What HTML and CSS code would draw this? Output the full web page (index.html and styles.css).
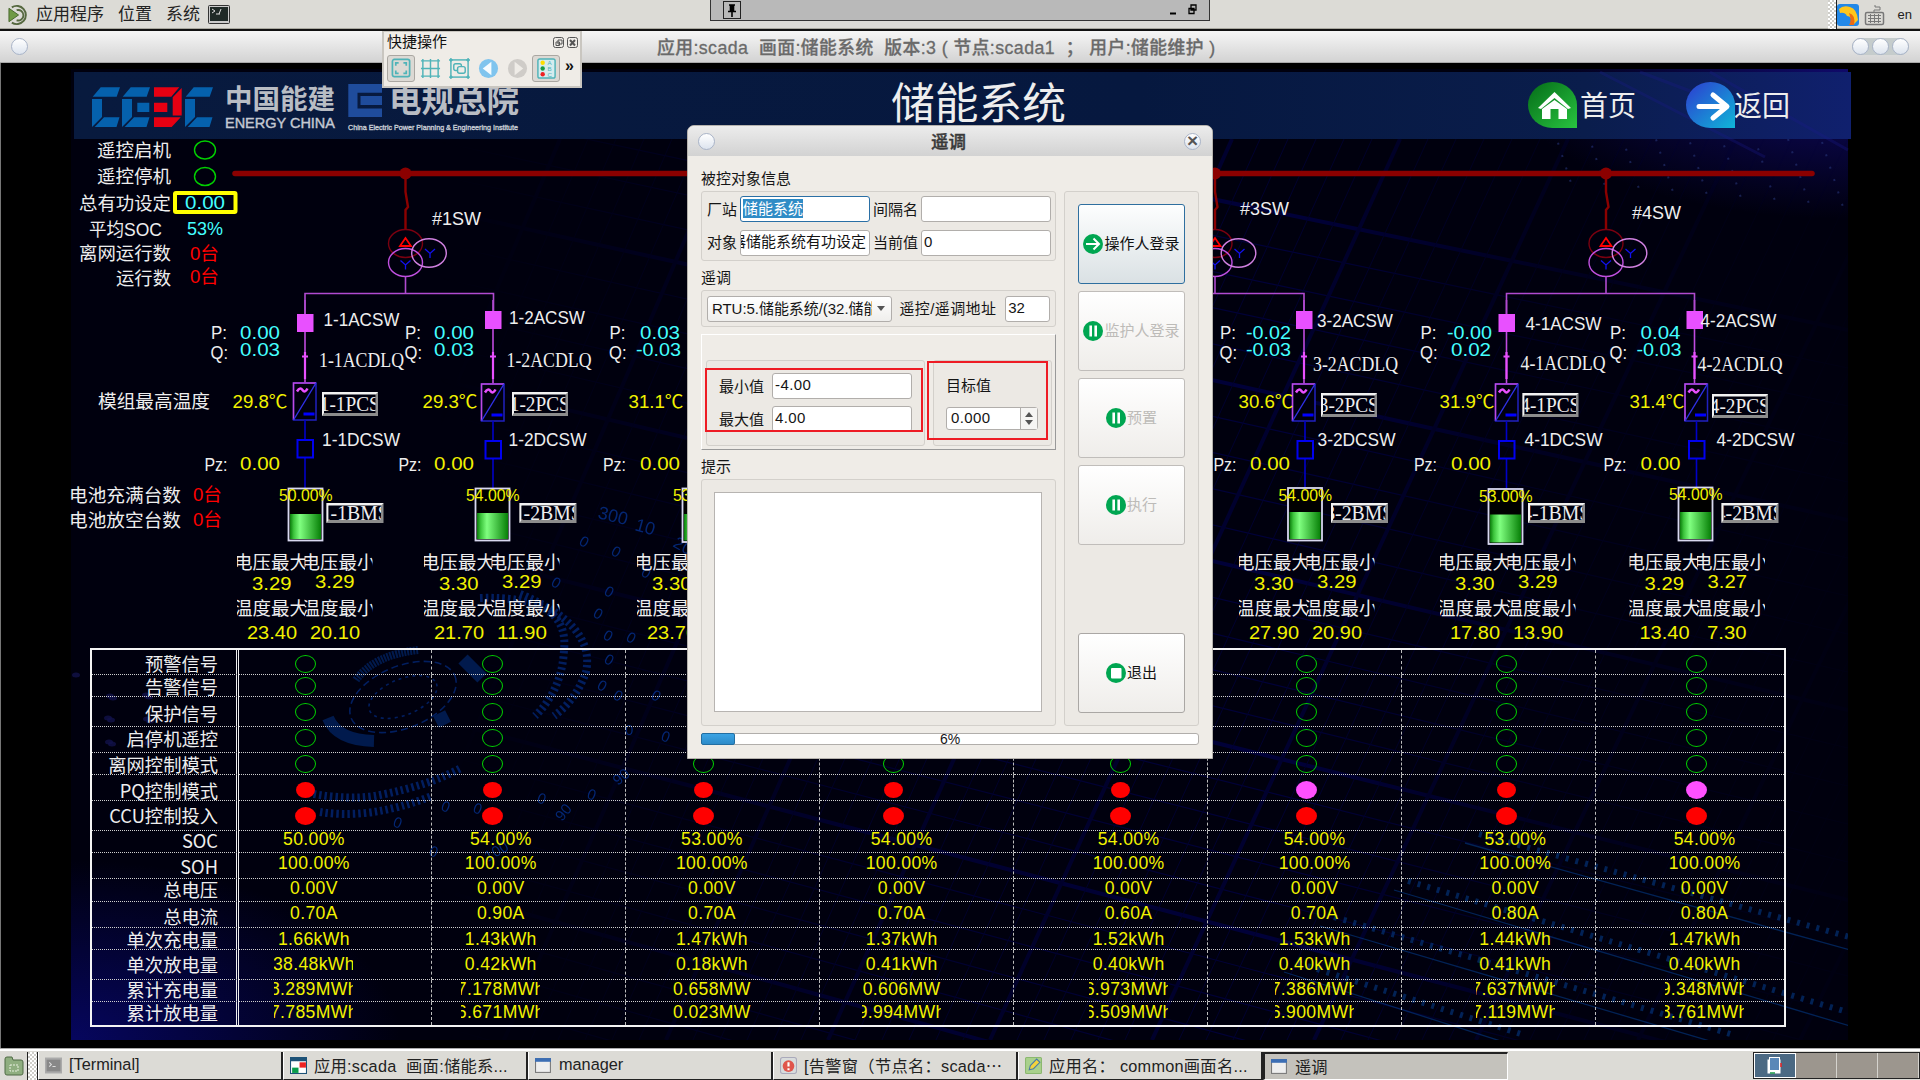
FILE: index.html
```html
<!DOCTYPE html>
<html lang="zh-CN">
<head>
<meta charset="utf-8">
<title>储能系统</title>
<link rel="stylesheet" href="styles.css">
</head>
<body>
<div class="desktop">
  <header class="panel">
    <svg class="mate-icon" viewBox="0 0 24 22"><path d="M1 4 L11 11 L1 18Z" fill="#6f9a45" stroke="#47662d"/><path d="M4 3 A9.5 9.5 0 1 1 4 19" fill="none" stroke="#55683f" stroke-width="2"/><path d="M9 6 A5.5 5.5 0 1 1 9 16.5" fill="none" stroke="#55683f" stroke-width="2"/></svg>
    <span class="menu m1">应用程序</span><span class="menu m2">位置</span><span class="menu m3">系统</span>
    <svg class="term-icon" viewBox="0 0 22 20"><rect x=".5" y=".5" width="21" height="18" rx="1" fill="#ccc" stroke="#333"/><rect x="2" y="2" width="18" height="14" fill="#1f2a27"/><path d="M4 4l3 2-3 2M8 9h4M13 4l-2 5" stroke="#ddd" fill="none"/></svg>
    <span class="clock"><i>月</i><i>日</i><i>星期</i></span>
    <div class="tray">
      <span class="grip"></span>
      <svg width="22" height="22" viewBox="0 0 22 22"><rect width="22" height="22" rx="3" fill="#2288e8"/><path d="M2 5Q6 1 13 3Q20 5 21 16L16 21Q15 12 10 12Q8 8 3 9Z" fill="#ffc61c"/><path d="M12 9q7 2 5 12h-5q3-4 0-12" fill="#ec6a12"/></svg>
      <svg width="22" height="22" viewBox="0 0 22 22" fill="none" stroke="#777"><rect x="1.500" y="8.500" width="18" height="12" rx="1.500" stroke-width="1.500"/><path d="M4 11.500h13M4 14.500h13M4 17.500h13M6.500 10v9M10.500 10v9M14.500 10v9M10 8V6h6V3h-5V1" /></svg>
      <span class="lang">en</span>
    </div>
    <div class="remote-bar">
      <svg class="pin" viewBox="0 0 18 18"><rect x=".5" y=".5" width="17" height="17" fill="none" stroke="#222"/><path d="M6 4h6M9 4v12M7.500 4v6M10.500 4v6M5 10.500h8" stroke="#000" stroke-width="1.600"/></svg>
      <svg class="winctl" viewBox="0 0 30 14"><path d="M1 10.500h6" stroke="#000" stroke-width="2"/><path d="M22 2h5v5h-5zM20 5.500h5v5h-5z" fill="#b9b9b9" stroke="#000" stroke-width="1.300"/></svg>
    </div>
  </header>

  <div class="titlebar">
    <span class="orb"></span>
    <span class="title">应用:scada&nbsp; 画面:储能系统&nbsp; 版本:3 ( 节点:scada1 &nbsp;； 用户:储能维护 )</span>
    <span class="orbs"><span class="orb"></span><span class="orb"></span><span class="orb"></span></span>
  </div>

  <main class="stage">
    <svg class="scene" id="scene" viewBox="0 63 1920 985"></svg>
    <div class="signals" id="signals"></div>

    <section class="quick">
      <div class="quick-head"><span>快捷操作</span>
        <svg width="26" height="12" viewBox="0 0 26 12" fill="none" stroke="#555"><rect x=".5" y=".5" width="10" height="10" rx="2"/><path d="M5 3h4v4h-4zM3 5h3.500v3.500h-3.500z"/><rect x="14.500" y=".5" width="10" height="10" rx="2"/><path d="M17 3l5 5.500M22 3l-5 5.500" stroke-width="2"/></svg>
      </div>
      <div class="quick-tools">
        <span class="tool on"><svg viewBox="0 0 22 22" fill="none" stroke="#4fb3b8" stroke-width="1.800"><rect x="1.500" y="1.500" width="18" height="18" rx="2"/><path d="M5 8V5h3M13 5h3v3M16 13v3h-3M8 16H5v-3"/></svg></span>
        <span class="tool"><svg viewBox="0 0 22 22" fill="none" stroke="#4fb3b8" stroke-width="1.500"><path d="M1 3h20M1 11h20M1 19h20M3 1v20M11 1v20M19 1v20"/></svg></span>
        <span class="tool"><svg viewBox="0 0 22 22" fill="none" stroke="#4fb3b8" stroke-width="1.500"><rect x="2" y="2" width="18" height="18"/><rect x="5" y="6" width="8" height="7" rx="2"/><rect x="9" y="9" width="8" height="7" rx="2" fill="#efece7"/><path d="M0 2h4M2 0v4M18 2h4M20 0v4M0 20h4M2 18v4M18 20h4M20 18v4"/></svg></span>
        <span class="tool"><svg viewBox="0 0 22 22"><circle cx="11" cy="11" r="10" fill="#7fc4ee"/><path d="M14 4v14L5 11Z" fill="#f4fbff"/></svg></span>
        <span class="tool"><svg viewBox="0 0 22 22"><circle cx="11" cy="11" r="10" fill="#cfccc8"/><path d="M8 4v14l9-7Z" fill="#efece7"/></svg></span>
        <span class="tool on"><svg viewBox="0 0 22 22"><rect x="2" y="1" width="18" height="20" rx="2" fill="#d5ecee" stroke="#4fb3b8" stroke-width="1.500"/><circle cx="7" cy="5" r="2.300" fill="#fd0"/><circle cx="7" cy="11" r="2.300" fill="#1a9a48"/><circle cx="7" cy="17" r="2.300" fill="#e22"/><text x="12" y="7.500" class="abc">A</text><text x="12" y="13.500" class="abc">B</text><text x="12" y="19.500" class="abc">C</text></svg></span>
        <span class="more">»</span>
      </div>
    </section>

    <section class="dialog">
      <div class="dialog-title"><span class="orb"></span><b>遥调</b><span class="orb close">×</span></div>
      <div class="dialog-body">
        <div class="left">
          <label class="cap c1">被控对象信息</label>
          <div class="group info">
            <span>厂站</span><div class="field focus"><mark>储能系统</mark></div><span>间隔名</span><div class="field"></div>
            <span>对象</span><div class="field tail"><span>器储能系统有功设定</span></div><span>当前值</span><div class="field">0</div>
          </div>
          <label class="cap c2">遥调</label>
          <div class="group rtu">
            <div class="combo"><span>RTU:5.储能系统/(32.储能</span><i class="down"></i></div>
            <span class="addr">遥控/遥调地址</span><div class="field">32</div>
          </div>
          <div class="frame">
            <div class="group limits">
              <span>最小值</span><div class="field">-4.00</div>
              <span>最大值</span><div class="field">4.00</div>
            </div>
            <div class="group target">
              <span>目标值</span>
              <div class="spin"><span>0.000</span><em><i class="up"></i><i class="down"></i></em></div>
            </div>
            <div class="mark mark-a"></div><div class="mark mark-b"></div>
          </div>
          <label class="cap c3">提示</label>
          <div class="group hint"><div class="textarea"></div></div>
        </div>
        <div class="group actions">
          <button class="act primary"><svg viewBox="0 0 20 20"><circle cx="10" cy="10" r="10" fill="#00a651"/><path d="M3 10h13M10.500 4.500L16 10l-5.500 5.500" stroke="#fff" stroke-width="2" fill="none"/></svg><span>操作人登录</span></button>
          <button class="act off"><svg viewBox="0 0 20 20"><circle cx="10" cy="10" r="10" fill="#00a651"/><path d="M7.700 4.500v11M12.700 4.500v11" stroke="#fff" stroke-width="2.600"/></svg><span>监护人登录</span></button>
          <button class="act off"><svg viewBox="0 0 20 20"><circle cx="10" cy="10" r="10" fill="#00a651"/><path d="M7.700 4.500v11M12.700 4.500v11" stroke="#fff" stroke-width="2.600"/></svg><span>预置</span></button>
          <button class="act off"><svg viewBox="0 0 20 20"><circle cx="10" cy="10" r="10" fill="#00a651"/><path d="M7.700 4.500v11M12.700 4.500v11" stroke="#fff" stroke-width="2.600"/></svg><span>执行</span></button>
          <button class="act exit"><svg viewBox="0 0 20 20"><circle cx="10" cy="10" r="10" fill="#00a651"/><rect x="5" y="5" width="10.500" height="10.500" rx="1" fill="#fff"/></svg><span>退出</span></button>
        </div>
      </div>
      <div class="progress"><i></i><span>6%</span></div>
    </section>
  </main>

  <footer class="taskbar">
    <span class="show"><svg viewBox="0 0 20 20"><path d="M1 3q0-2 2-2h5l1 3h8q2 0 2 2v11q0 2-2 2H3q-2 0-2-2Z" fill="#8fae80" stroke="#4f6b45"/><rect x="6" y="9" width="8" height="6" fill="none" stroke="#e8f0e0" stroke-dasharray="2 1"/></svg></span>
    <span class="grip"></span>
    <span class="task"><svg viewBox="0 0 16 16"><rect x=".5" y="1.500" width="15" height="13" fill="#888" stroke="#aaa" stroke-width="2"/><path d="M4 5l2 2-2 2M7 9h3" stroke="#ddd" fill="none"/></svg><b>[Terminal]</b></span>
    <span class="task"><svg viewBox="0 0 16 16"><rect x=".5" y=".5" width="15" height="15" fill="#fff" stroke="#1d5277"/><path d="M0 0h16v4H0z" fill="#1d5277"/><path d="M9 5h6v5H9z" fill="#e22"/><path d="M2 10h6v5H2z" fill="#0a9c4b"/></svg><b class="wide">应用:scada&nbsp; 画面:储能系...</b></span>
    <span class="task"><svg viewBox="0 0 16 16"><rect x=".5" y="1.500" width="14" height="13" fill="#eee" stroke="#777"/><path d="M0 1h15v3.500H0z" fill="#3c6eb4"/></svg><b>manager</b></span>
    <span class="task"><svg viewBox="0 0 16 16"><rect x=".5" y=".5" width="15" height="15" rx="2" fill="#d8dcdc" stroke="#aab"/><circle cx="8" cy="8.500" r="5.500" fill="#e0554c"/><path d="M8 5v4M8 10.500v2" stroke="#fff" stroke-width="2"/></svg><b class="wide">[告警窗（节点名：scada⋯</b></span>
    <span class="task"><svg viewBox="0 0 16 16"><rect x=".5" y=".5" width="15" height="15" rx="1" fill="#a9d18c" stroke="#8bb86f"/><path d="M4 12l1-4 6-6 3 3-6 6Z" fill="#f4d33c" stroke="#4a7aa8"/></svg><b class="wide">应用名： common画面名...</b></span>
    <span class="task active"><svg viewBox="0 0 16 16"><rect x=".5" y="1.500" width="14" height="13" fill="#eee" stroke="#777"/><path d="M0 1h15v3.500H0z" fill="#3c6eb4"/></svg><b>遥调</b></span>
    <span class="spaces"><i class="cur"><svg viewBox="0 0 16 18"><rect x=".5" y="2.500" width="13" height="14" fill="#fff"/><rect x="2.500" y=".5" width="10" height="13" fill="#5a88b8" stroke="#fff"/><path d="M3 16h5" stroke="#1a9a48" stroke-width="1.500"/><path d="M14 6v4" stroke="#e22" stroke-width="1.500"/></svg></i><i></i><i></i><i></i></span>
  </footer>
</div>
<script src="app.js"></script>
</body>
</html>
```
FILE: styles.css
```css
* { box-sizing: border-box; }
body { margin: 0; background: #000; font-family: "Liberation Sans", "Noto Sans CJK SC", sans-serif; }
i, em { font-style: normal; }
.desktop { width: 1920px; height: 1080px; display: flex; flex-direction: column; overflow: hidden; }

.panel { height: 31px; background: #dcdbd6; border-bottom: 2px solid #111; display: flex; align-items: center; position: relative; font-size: 17px; color: #222; box-shadow: inset 0 -1px #a9a89f; }
.mate-icon { width: 23px; height: 22px; margin-left: 8px; }
.menu { line-height: 28px; white-space: nowrap; }
.m1 { margin-left: 5px; width: 68px; }
.m2 { margin-left: 14px; width: 34px; }
.m3 { margin-left: 14px; width: 34px; }
.term-icon { width: 22px; height: 20px; margin-left: 8px; }
.clock { margin-left: 793px; display: flex; gap: 12px; line-height: 22px; height: 24px; font-size: 15px; }
.tray { margin-left: auto; display: flex; align-items: center; gap: 5px; padding-right: 8px; }
.tray svg:nth-of-type(1) { margin-left: -1px; }
.tray .lang { font-size: 13px; margin-left: 7px; }
.grip { width: 9px; height: 29px; background: repeating-conic-gradient(#fff 0 25%, #cfcec9 0 50%) 0 0 / 4px 4px; border-right: 1px solid #222; }
.tray .grip { margin-right: -4px; }
.remote-bar { position: absolute; left: 710px; top: 0; width: 500px; height: 21px; background: #b9b9b9; border: 1px solid #333; border-top: 0; display: flex; justify-content: space-between; }
.pin { width: 18px; height: 18px; margin: 1px 0 0 12px; }
.winctl { width: 30px; height: 14px; margin: 3px 10px 0 0; }

.titlebar { height: 32px; background: linear-gradient(#f6f6f6, #d3d3d3); border-bottom: 1px solid #aaa; display: flex; align-items: center; position: relative; padding: 0 11px 0 11px; }
.title { margin-left: 629px; margin-top: -2px; width: 600px; white-space: nowrap; font-size: 17.8px; color: #6a6a6a; font-weight: 500; -webkit-text-stroke: .3px #6a6a6a; letter-spacing: .42px; }
.orb { width: 17px; height: 17px; border-radius: 50%; background: linear-gradient(#fff, #dde4ee); border: 1.5px solid #a9b4c8; display: inline-block; flex: none; }
.orbs { margin-left: auto; display: flex; gap: 3px; background: #c5cccc; border-radius: 9px; }

.stage { height: 985px; position: relative; background: #000; box-shadow: inset 1px 0 #777; padding: 585px 0 0 90px; }
.scene { position: absolute; left: 0; top: 0; width: 1920px; height: 985px; }
.scene text { font-family: "Liberation Sans", "Noto Sans CJK SC", sans-serif; white-space: pre; }
.scene .serif { font-family: "Liberation Serif", serif; }
.w { fill: #eee; } .y { fill: #f2f200; } .c { fill: #4ff; } .r { fill: #f00; }
.scene .logo-cn { fill: #b9bdc4; font-weight: 700; }
.scene .logo-en { fill: #c4c9d2; font-weight: 400; stroke: #c4c9d2; stroke-width: .4px; }

.signals { position: relative; width: 1696px; height: 379px; border: 2px solid #f4f4f4; display: grid; grid-template-columns: 147px 193px repeat(6, 194px) 188px; grid-template-rows: 25px 22px 30px 26px 22px 26px 30px 22px 26px 23px 26px 22px 30px 22px 23px; }
.cell { border-bottom: 1px dotted #cfcfcf; border-right: 1px dashed #bbb; display: flex; align-items: flex-start; min-width: 0; min-height: 0; }
.cell:nth-child(9n+1) { border-right: 3px double #eee; justify-content: flex-end; padding-right: 18px; }
.cell:nth-child(9n) { border-right: 0; }
.cell:nth-last-child(-n+9) { border-bottom: 0; }
.name { color: #eee; font-family: "Noto Sans CJK SC", sans-serif; font-size: 18.3px; line-height: 20px; white-space: nowrap; flex: none; }
.val { color: #f2f200; font-size: 17.6px; letter-spacing: .35px; line-height: 20px; width: 79px; overflow: hidden; display: flex; justify-content: center; flex: none; white-space: nowrap; }
.lamp { width: 21px; height: 18px; border-radius: 50%; border: 1.5px solid #00d000; flex: none; }
.lamp.red { background: #f00; border: 0; }
.lamp.pq { width: 19px; height: 16px; }
.lamp.pink { background: #ff50ff; border: 0; }

.quick { position: absolute; left: 382px; top: -32px; width: 200px; height: 57px; background: #efece7; border: 2px solid #c9c6c0; border-top-width: 1px; padding: 0 1px 0 3px; color: #111; }
.quick-head { display: flex; justify-content: space-between; align-items: center; font-size: 15px; line-height: 18px; height: 22px; }
.quick-head span { margin-top: -2px; }
.quick-tools { display: flex; height: 28px; gap: 1px; align-items: center; }
.tool { width: 28px; height: 27px; display: flex; align-items: center; justify-content: center; border-radius: 3px; flex: none; }
.tool svg { width: 21px; height: 21px; }
.tool.on { background: #dcd9d4; border: 1px solid #aaa7a2; }
.abc { font-size: 6.5px; fill: #4fb3b8; }
.more { font-size: 16px; margin: -5px 0 0 4px; line-height: 24px; font-weight: 700; }

.dialog { position: absolute; left: 687px; top: 62px; width: 526px; height: 634px; background: #efece7; border: 1px solid #b5b2ad; border-radius: 7px 7px 0 0; font-size: 15px; color: #151515; overflow: hidden; }
.dialog-title { height: 30px; background: linear-gradient(#ececec, #d2d2d2); display: flex; justify-content: space-between; align-items: center; padding: 0 11px 0 10px; font-size: 17.5px; color: #3a3a3a; }
.dialog-title b { font-weight: 500; -webkit-text-stroke: .4px #3a3a3a; margin: -2px 2px 0 0; }
.close { font-size: 19px; line-height: 13px; text-align: center; font-weight: 700; color: #555; }
.dialog-body { display: flex; height: 571px; padding: 0 13px; justify-content: space-between; }
.left { width: 355px; }
.cap { display: block; line-height: 20px; }
.c1 { margin-top: 13px; height: 22px; }
.c2 { margin-top: 7px; height: 22px; }
.c3 { margin-top: 7px; height: 22px; }
.group { background: #ece9e4; border: 1px solid #d3d0cb; border-radius: 3px; }
.field { height: 26px; background: #fff; border: 1px solid #b1aeab; border-radius: 3px; line-height: 22px; padding: 0 2px; overflow: hidden; white-space: nowrap; }
.field.focus { border-color: #2a6fa5; }
mark { background: #308cc6; color: #fff; padding: 0; display: inline-block; line-height: 19px; margin-top: 2px; }
.tail { display: flex; justify-content: flex-end; padding: 0 3px 0 0; }
.info { height: 70px; padding: 4px 5px; display: grid; grid-template-columns: 33px 130px 51px 130px; row-gap: 7px; align-items: center; white-space: nowrap; }
.info > span:nth-of-type(even) { padding-left: 3px; }
.info > span { margin-top: -2px; }
.rtu { height: 37px; padding: 4px 5px; display: flex; align-items: center; white-space: nowrap; }
.combo { width: 186px; height: 26px; border: 1px solid #b1aeab; border-radius: 3px; background: linear-gradient(#fff, #efeeec); padding: 0 6px 0 4px; line-height: 22px; display: flex; align-items: center; justify-content: space-between; }
.combo span { width: 160px; overflow: hidden; letter-spacing: -.05px; }
.down, .up { border: 4px solid transparent; border-bottom: 0; border-top: 5px solid #555; width: 0; height: 0; flex: none; }
.up { border-top: 0; border-bottom: 5px solid #555; }
.addr { margin: -2px 8px 0 7px; width: 98px; letter-spacing: .4px; }
.rtu .field { width: 45px; }
.frame { margin-top: 7px; height: 116px; border: 1px solid; border-color: #fff #999 #999 #fff; position: relative; padding: 25px 3px 0 4px; display: flex; justify-content: space-between; }
.limits { width: 219px; height: 86px; padding: 12px 12px 0; display: grid; grid-template-columns: 53px 140px; grid-template-rows: 26px 26px; row-gap: 7px; align-items: center; }
.limits > span { margin-top: -2px; }
.limits .field, .spin { letter-spacing: .4px; }
.target { width: 119px; height: 86px; padding: 14px 12px; }
.target > span { display: block; line-height: 22px; }
.spin { width: 92px; height: 23px; margin-top: 10px; border: 1px solid #b1aeab; border-radius: 3px; background: #fff; display: flex; justify-content: space-between; line-height: 20px; padding-left: 4px; }
.spin em { width: 17px; border-left: 1px solid #b1aeab; display: flex; flex-direction: column; justify-content: space-evenly; align-items: center; background: #f6f5f3; }
.mark { position: absolute; border: 2px solid #ee1c25; }
.mark-a { left: 3px; top: 33px; width: 218px; height: 64px; }
.mark-b { left: 225px; top: 26px; width: 121px; height: 79px; }
.hint { height: 247px; padding: 12px; }
.textarea { width: 328px; height: 220px; background: #fff; border: 1px solid #b7b4b1; }
.actions { width: 135px; height: 535px; margin-top: 35px; padding: 12px 13px; display: flex; flex-direction: column; gap: 7px; }
.act { width: 107px; height: 80px; flex: none; border: 1px solid #c0bdba; border-radius: 3px; background: linear-gradient(#fff, #efedea); font: 15px "Liberation Sans", "Noto Sans CJK SC", sans-serif; color: #111; display: flex; align-items: center; justify-content: center; padding: 0; gap: 1px; white-space: nowrap; }
.act svg { width: 20px; height: 20px; flex: none; }
.act span { margin-top: -3px; }
.primary { border-color: #2f6f9f; background: linear-gradient(#fdfefe, #dae1e4); }
.off { color: #bdbbb8; }
.exit { margin-top: auto; border-color: #aaa7a4; }
.progress { width: 498px; height: 12px; margin: 6px 0 0 13px; background: #fff; border: 1px solid #b1aeab; border-radius: 3px; position: relative; display: flex; justify-content: center; font-size: 14px; line-height: 11px; }
.progress i { position: absolute; left: -1px; top: -1px; width: 34px; height: 12px; background: linear-gradient(#3ba4e4, #2c8bc9); border: 1px solid #226ea2; border-radius: 2px; }

.taskbar { height: 32px; background: #dcdbd6; border-top: 1px solid #aaa; box-shadow: inset 0 2px #fff; display: flex; padding-top: 3px; font-size: 16.3px; color: #222; }
.show { width: 28px; padding: 4px 4px; border-right: 1px solid #222; }
.show svg { width: 20px; height: 20px; display: block; }
.taskbar .grip { width: 10px; height: 28px; border-right: 1px solid #222; }
.task { width: 245px; height: 28px; border-right: 2px solid #222; border-bottom: 1px solid #222; border-left: 1px solid #fff; display: flex; align-items: center; gap: 7px; padding-left: 6px; white-space: nowrap; overflow: hidden; flex: none; }
.task b { font-weight: 400; margin-top: -2px; }
.task .wide { letter-spacing: .25px; }
.task svg { width: 17px; height: 17px; flex: none; }
.active { background: #c4c2bc; border: 1px solid #fff; border-top: 2px solid #222; border-left: 2px solid #222; }
.spaces { margin-left: auto; width: 167px; border: 1px solid #222; background: #9c968e; display: flex; height: 27px; }
.spaces i { flex: 1; border-right: 1px solid #d5d3ce; display: flex; align-items: center; justify-content: center; }
.spaces .cur { background: #4b6983; border: 1px solid #fff; }
.cur svg { width: 16px; height: 18px; }
```
FILE: app.js
```js
// One-line diagram and signal table of the energy storage station.
const out = [];
const cjk = /[\u4e00-\u9fff]/;

function text(s, x0, x1, yc, size, cls) {
  const y = yc + size * (cjk.test(s) ? 0.36 : 0.36);
  out.push(`<text class="${cls}" x="${x0}" y="${y}" font-size="${size}" textLength="${x1 - x0}" lengthAdjust="spacingAndGlyphs">${s}</text>`);
}
function clipped(s, x, yc, w, h, size, len, cls) {
  const dy = h / 2 + size * (cjk.test(s) ? 0.36 : 0.34);
  out.push(`<svg x="${x}" y="${yc - h / 2}" width="${w}" height="${h}" overflow="hidden"><text class="${cls}" x="${(w - len) / 2}" y="${dy}" font-size="${size}" textLength="${len}" lengthAdjust="spacingAndGlyphs">${s}</text></svg>`);
}
const line = (x1, y1, x2, y2, c, w = 1.6) =>
  out.push(`<path d="M${x1} ${y1}L${x2} ${y2}" stroke="${c}" stroke-width="${w}" fill="none"/>`);
const ring = (x, y, rx, ry, c) =>
  out.push(`<ellipse cx="${x}" cy="${y}" rx="${rx}" ry="${ry}" fill="none" stroke="${c}" stroke-width="1.4"/>`);

function backdrop() {
  out.push(`<defs>
    <linearGradient id="bat"><stop offset="0" stop-color="#0a7a0a"/><stop offset=".12" stop-color="#3cc43c"/><stop offset=".32" stop-color="#80ff80"/><stop offset="1" stop-color="#078007"/></linearGradient>
    <radialGradient id="corner" cx="0" cy="1" r="1"><stop offset="0" stop-color="#06065e"/><stop offset="1" stop-color="#06065e" stop-opacity="0"/></radialGradient>
    <radialGradient id="corner2" cx="1" cy="0" r="1"><stop offset="0" stop-color="#100a6a"/><stop offset="1" stop-color="#100a6a" stop-opacity="0"/></radialGradient>
    <linearGradient id="fade"><stop offset="0" stop-color="#000"/><stop offset=".3" stop-color="#999"/><stop offset=".6" stop-color="#ccc"/><stop offset=".8" stop-color="#555"/><stop offset="1" stop-color="#181818"/></linearGradient>
    <mask id="m"><rect x="440" y="139" width="1408" height="901" fill="url(#fade)"/></mask>
    <linearGradient id="home" x2="1" y2="1"><stop offset="0" stop-color="#056b18"/><stop offset="1" stop-color="#28c440"/></linearGradient>
    <linearGradient id="back" x2="1" y2="1"><stop offset="0" stop-color="#2d3bd0"/><stop offset="1" stop-color="#0fb6d8"/></linearGradient>
    <linearGradient id="band"><stop offset="0" stop-color="#081a3e"/><stop offset=".6" stop-color="#06183f"/><stop offset=".85" stop-color="#0a1d4c"/><stop offset="1" stop-color="#10206e"/></linearGradient>
    <clipPath id="area"><rect x="71" y="69" width="1777" height="971"/></clipPath></defs>
    <rect x="71" y="69" width="1777" height="971" fill="#00000e"/>
    <rect x="71" y="860" width="330" height="180" fill="url(#corner)"/>
    <rect x="1500" y="69" width="348" height="150" fill="url(#corner2)"/>
    <g clip-path="url(#area)">`);
  out.push('<g mask="url(#m)">');
  for (let k = 0; k < 30; k++) line(440, 40 + k * 34, 1848, 330 + k * 38, '#000044', k % 5 ? 1.2 : 4);
  for (let k = 0; k < 62; k++) line(560 + k * 28, 139, 180 + k * 27, 1040, '#000038', k % 6 ? 1 : 4);
  out.push('</g>');
  // Dial, arcs and scattered digits
  out.push(`<g fill="none" stroke="#03287a" opacity=".75">
    <ellipse cx="403" cy="697" rx="56" ry="31" transform="rotate(-22 403 697)" stroke-dasharray="7 4" stroke-width="1.6"/>
    <ellipse cx="403" cy="697" rx="36" ry="18" transform="rotate(-22 403 697)" stroke-dasharray="3 4" stroke-width="1.6"/>
    <path d="M328 718Q337 740 374 741" stroke="#022362" stroke-width="12"/>
    <path d="M356 680Q374 655 418 650" stroke="#022362" stroke-width="8" stroke-dasharray="2 1"/>
    <path d="M463 659L482 678M436 722l12-6" stroke="#022362" stroke-width="13"/>
    <path d="M480 598Q570 595 564 650Q562 690 535 716" stroke-width="8" stroke-dasharray="2.500 3"/>
    <path d="M520 594Q596 625 586 672Q576 700 554 716" stroke-width="8" stroke-dasharray="2.500 3"/>
    <path d="M308 793Q350 801 380 795Q430 785 461 768" stroke-width="8" stroke-dasharray="2.500 3"/>
    <path d="M320 812Q370 820 432 796" stroke-width="8" stroke-dasharray="2.500 3"/></g>`);
  const digits = [['300', 597, 518, 14, 18], ['10', 634, 530, 16, 18], ['20', 672, 546, 30, 17], ['0', 578, 544, 30], ['0', 610, 554, 30], ['0', 640, 575, 30], ['0', 550, 585, 30], ['0', 603, 594, 30], ['0', 592, 616, 30], ['0', 602, 638, 30], ['0', 625, 640, 30], ['0', 603, 662, 30], ['0', 596, 688, 30], ['0', 612, 698, 30], ['0', 650, 698, 30], ['0', 625, 735, 0], ['0', 660, 740, 20], ['0', 586, 798, 20], ['90', 618, 786, -40], ['90', 562, 822, -50], ['0', 536, 802, 20], ['0', 440, 810, 20], ['0', 472, 812, 20], ['0', 392, 826, 20], ['0', 428, 855, 20], ['100', 488, 862, -30]];
  digits.forEach(([s, x, y, a, z = 15]) => out.push(`<text x="${x}" y="${y}" font-size="${z}" fill="#05308c" opacity=".8" transform="rotate(${a} ${x} ${y}) skewX(-15)" style="transform-origin:${x}px ${y}px">${s}</text>`.replace(/ style="[^"]*"/, '').replace(' skewX(-15)', '')));
  // Ruler-like strips, bottom right
  [[1465, 843, 1850, 950], [1394, 890, 1850, 1026], [1320, 926, 1720, 1044], [1284, 972, 1510, 1044]].forEach(([a, b, c, d]) => {
    out.push(`<path d="M${a} ${b}L${c} ${d}" stroke="#04357c" opacity=".65" stroke-width="1.300"/>`);
    out.push(`<path d="M${a + 14} ${b - 9}L${c + 14} ${d - 9}" stroke="#04357c" opacity=".65" stroke-width="6" stroke-dasharray="3 7"/>`);
  });
  for (let k = 0; k < 9; k++) out.push(`<path d="M${1550 + k * 34} ${118 + k * 3}l22 68" stroke="#2a3a80" opacity=".55" stroke-width="2" stroke-dasharray="2 11"/>`);
  for (let k = 0; k < 12; k++) out.push(`<ellipse cx="${76 + (k * 37) % 75}" cy="${675 + (k * 23) % 70}" rx="4" ry="2.500" fill="#12124a" opacity=".8"/>`);
  out.push('</g>');
}

function header() {
  const cShape = 'l8.700-9.300h19.300l-3.300 9.400h-24zM0 11.700';
  const c = x => `M${x + .7} 96.700l8-9.400h19.300l-3.300 9.400zM${x} 99h10v18l-10 10zM${x + 12} 117.300h15.500l-3 9.700h-21.800z`;
  out.push(`<rect x="74" y="72" width="1777" height="67" fill="url(#band)"/>
    <path d="M1600 72L1765 157M1640 72L1740 110M1710 72L1848 150" stroke="#1a1a8a" stroke-width="3" opacity=".3"/>
    <path d="${c(92)}${c(122)}${c(185)}M137.300 102.700h12v9.300h-12z" fill="#0561ad"/>
    <path d="M154 87.300h25.300l-8 9.400H154zM154 102.700h13.300v9.300H154zM154 117.300h26.700l-9 9.700H154zM181.700 88v27.500h-9V97.300z" fill="#e60012"/>
    <path d="M348.300 84H382v8.700h-24.500V117h-9.200zM360.500 96H382v9h-21.500zM357.500 108.500H382v8.500h-24.500z" fill="#1f4c9c"/>`);
  text('中国能建', 225, 335, 99.500, 27, 'logo-cn');
  text('ENERGY CHINA', 225, 335, 122.500, 14.5, 'logo-en');
  text('电规总院', 389, 519, 100.500, 32, 'logo-cn');
  text('China Electric Power Planning &amp; Engineering Institute', 348, 518, 127, 8, 'logo-en');
  text('储能系统', 891, 1066, 103.500, 43.5, 'w');
  text('首页', 1580, 1636, 105.500, 28, 'w');
  text('返回', 1734, 1790, 105.500, 28, 'w');
  out.push(`<path d="M1577 128V105A24.500 23 0 1 0 1552.500 128Z" fill="url(#home)"/>
    <path d="M1538 108L1554.500 92L1571 108L1568 109L1554.500 98L1541 109Z" fill="#fff"/><path d="M1542 109l12.500-9 12.500 9v10h-8.500v-10h-8v10H1542Z" fill="#fff"/>
    <path d="M1735 128V105A24.500 23 0 1 0 1710.500 128Z" fill="url(#back)"/>
    <path d="M1699 106.500h27M1713 95l14 11.500l-14 11.500" fill="none" stroke="#fff" stroke-width="5" stroke-linecap="round" stroke-linejoin="round"/>`);
}

function summary() {
  text('遥控启机', 97, 171, 150.500, 18.400, 'w'); ring(205, 150, 10.5, 9, '#00d000');
  text('遥控停机', 97, 171, 176.500, 18.400, 'w'); ring(205, 176.500, 10.5, 9, '#00d000');
  text('总有功设定', 79, 171, 203, 18.400, 'w');
  out.push('<rect x="175" y="193" width="60.500" height="19" rx="1" fill="none" stroke="#ff0" stroke-width="4"/>');
  text('0.00', 185, 225, 202.500, 18.5, 'c');
  text('平均SOC', 89, 162, 229, 18.400, 'w'); text('53%', 187, 223, 228.500, 18.5, 'c');
  text('离网运行数', 79, 171, 253.500, 18.400, 'w'); text('0台', 190, 219, 253.500, 18, 'r');
  text('运行数', 116, 171, 278, 18.400, 'w'); text('0台', 190, 219, 277, 18, 'r');
  text('模组最高温度', 98, 210, 401.500, 18.400, 'w');
  text('电池充满台数', 69, 181, 495, 18.400, 'w'); text('0台', 193, 222, 495, 18, 'r');
  text('电池放空台数', 69, 181, 520, 18.400, 'w'); text('0台', 193, 222, 519.500, 18, 'r');
}

function feeder(name, x, left, right, lx, ly) {
  const red = '#8b0000';
  out.push(`<circle cx="${x}" cy="173.500" r="6" fill="${red}"/>`);
  out.push(`<path d="M${x} 176V192L${x + 2.500} 207L${x} 210V229" fill="none" stroke="${red}" stroke-width="2.400"/>`);
  ring(x, 243.5, 17, 14, '#7a0010');
  ring(x, 262.5, 17, 14, '#c050e0');
  ring(x + 23.5, 253, 17.3, 14.3, '#d080e0');
  out.push(`<path d="M${x} 238l-5.500 8h11z" fill="none" stroke="#f00" stroke-width="1.800"/>`);
  [[x + 24.5, 249], [x, 260.500]].forEach(([a, b]) => out.push(`<path d="M${a - 5} ${b}l5 4.500l5-4.500M${a} ${b + 4.500}v4.500" fill="none" stroke="#11e" stroke-width="1.300"/>`));
  line(x, 276.5, x, 293.5, '#b04ad0');
  out.push(`<path d="M${left} 314V293.500H${right}V314" fill="none" stroke="#b04ad0" stroke-width="1.600"/>`);
  text(name, lx, lx + 49, ly, 18.5, 'w');
}

function bay(b) {
  const s = b.x, top = b.sq, pink = '#e850ff', blue = '#0000c8';
  line(s, 300, s, top, '#b04ad0');
  out.push(`<rect x="${s - 8}" y="${top}" width="16.500" height="18" fill="${pink}"/>`);
  line(s, top + 18, s, b.box, '#c04ae0', 1.6);
  line(s, 352, s, 379, pink, 2.2);
  out.push(`<path d="M${s - 3} 356.500h6" stroke="${pink}" stroke-width="2"/>`);
  text(b.id + 'ACSW', b.ac[0], b.ac[0] + 76, b.ac[1], 18.3, 'w');
  text(b.id + 'ACDLQ', b.dl[0], b.dl[0] + 85, b.dl[1], 20, 'w serif');
  const bx = b.bx;
  out.push(`<rect x="${bx}" y="${b.box}" width="22.500" height="37" fill="#00000e" stroke="#2020c0" stroke-width="1.500"/>
    <path d="M${bx} ${b.box + 37}V${b.box}H${bx + 22.500}" fill="none" stroke="#c04ae0" stroke-width="1.500"/>
    <path d="M${bx} ${b.box + 37}L${bx + 22.500} ${b.box}" stroke="#3030e8" stroke-width="1.400"/>
    <path d="M${bx + 3.500} ${b.box + 8.500}q3-5 5.500-1.500t5-1.500" fill="none" stroke="${pink}" stroke-width="2.500"/>
    <path d="M${bx + 10} ${b.box + 31}h11" stroke="#00f" stroke-width="3"/>`);
  const d = b.dx || s;
  line(d, b.box + 37, d, b.dsq, blue); line(d, b.dsq + 18, d, b.bt, blue);
  out.push(`<rect x="${d - 7.500}" y="${b.dsq}" width="15.500" height="17.500" fill="none" stroke="#0000f0" stroke-width="2"/>`);
  text(b.id + 'DCSW', b.dc, b.dc + 78, 439.5, 18.3, 'w');
  plate(b.id + 'PCS', b.pcs[0], b.pcs[1], 56, 24, 60);
  plate(b.id + 'BMS', b.bms, 503, 57, 20, 68);
}
function plate(s, x, y, w, h, len) {
  out.push(`<rect x="${x}" y="${y}" width="${w}" height="${h}" fill="#8c8c8c"/><path d="M${x} ${y}h${w}l-3 3h-${w - 5}v${h - 6}l-2 3z" fill="#f2f2f2"/><rect x="${x + 2}" y="${y + 2.500}" width="${w - 4.500}" height="${h - 5.500}" fill="#00000e"/>`);
  clipped(s, x + 2, y + h / 2, w - 4.5, h - 4, 20, len, 'w serif');
}

function readings(b) {
  text('P:', b.p, b.p + 16, 332, 18.5, 'w'); text('Q:', b.p - .5, b.p + 17, 352, 18.5, 'w');
  const num = (s, x0, y, c, size = 18.3) => text(s, s[0] === '-' ? x0 - 5 : x0 - 1, x0 + 39 + (s[0] === '-' ? 1 : 0), y, size, c);
  num(b.v[0], b.n, 332.5, 'c'); num(b.v[1], b.n, 349.500, 'c');
  text(b.v[2] + '℃', b.t, b.t + 55, 401.5, 18.3, 'y');
  text('Pz:', b.p - 6.5, b.p + 16.5, 464, 18.5, 'w'); num('0.00', b.n, 463, 'y');
  out.push(`<rect x="${b.bat}" y="${b.bt}" width="34" height="${b.bb - b.bt}" fill="#000" stroke="#d8d8f0" stroke-width="1.800"/>
    <rect x="${b.bat + 1.500}" y="${b.g}" width="31" height="${b.bb - b.g - 1.500}" fill="url(#bat)"/>`);
  text(b.soc, b.bat - 9.5, b.bat + 44, b.bt + 7, 16.5, 'y');
  const L = b.lab;
  clipped('电压最大', L, 562, 68, 24, 18.4, 74, 'w'); clipped('电压最小', L + 67.5, 562, 68, 24, 18.4, 74, 'w');
  clipped('温度最大', L, 608, 68, 24, 18.4, 74, 'w'); clipped('温度最小', L + 67.5, 608, 68, 24, 18.4, 74, 'w');
  text(b.u[0], L + 15, L + 54.5, 583.5, 18.3, 'y'); text(b.u[1], L + 78, L + 117.5, 581.5, 18.3, 'y');
  text(b.k[0], L + 10, L + 60, 632, 18.3, 'y');
  const short = b.k[1].length < 5;
  text(b.k[1], L + (short ? 77.5 : 73), L + (short ? 117 : 123), 632, 18.3, 'y');
}

const bays = [
  { id: '1-1', x: 305, sq: 314, ac: [323.5, 319], dl: [319, 360], bx: 293.5, box: 383, dsq: 440, dc: 322, pcs: [322, 392], bms: 326.5, p: 211, n: 241, t: 232.5, v: ['0.00', '0.03', '29.8'], bat: 288.5, bt: 488.500, bb: 540.5, g: 514, soc: '50.00%', lab: 237, u: ['3.29', '3.29'], k: ['23.40', '20.10'] },
  { id: '1-2', x: 493, sq: 311, ac: [509, 317], dl: [506.500, 360], bx: 481.5, box: 384, dsq: 441, dc: 508.5, pcs: [512, 392], bms: 519.5, p: 405, n: 435, t: 422.5, v: ['0.00', '0.03', '29.3'], bat: 475.5, bt: 488.500, bb: 540.5, g: 513, soc: '54.00%', lab: 424, u: ['3.30', '3.29'], k: ['21.70', '11.90'] },
  { hidden: true, p: 609.5, n: 641, t: 628.5, v: ['0.03', '-0.03', '31.1'], bat: 682.5, bt: 488.500, bb: 542, g: 514, soc: '53.00%', lab: 637, u: ['3.30', '3.29'], k: ['23.70', '20.10'] },
  { id: '3-2', x: 1304, dx: 1305, sq: 311, ac: [1317, 320.5], dl: [1313, 363.5], bx: 1292.5, box: 384, dsq: 441, dc: 1317.5, pcs: [1321, 393], bms: 1331, p: 1220, n: 1251, t: 1238.5, v: ['-0.02', '-0.03', '30.6'], bat: 1288, bt: 488, bb: 540.5, g: 512, soc: '54.00%', lab: 1239, u: ['3.30', '3.29'], k: ['27.90', '20.90'] },
  { id: '4-1', x: 1506.5, sq: 314, ac: [1525.5, 323], dl: [1520.5, 362.5], bx: 1495.5, box: 384, dsq: 441, dc: 1524.5, pcs: [1522.5, 393], bms: 1528, p: 1420.5, n: 1452, t: 1439.5, v: ['-0.00', '0.02', '31.9'], bat: 1488.5, bt: 489, bb: 544, g: 514.5, soc: '53.00%', lab: 1440, u: ['3.30', '3.29'], k: ['17.80', '13.90'] },
  { id: '4-2', x: 1694.5, dx: 1696.5, sq: 311, ac: [1700.5, 320.5], dl: [1697.5, 364], bx: 1685, box: 384, dsq: 441, dc: 1716.5, pcs: [1712, 394], bms: 1721.5, p: 1610, n: 1641.5, t: 1629.5, v: ['0.04', '-0.03', '31.4'], bat: 1678.5, bt: 487.5, bb: 540.5, g: 512, soc: '54.00%', lab: 1629.5, u: ['3.29', '3.27'], k: ['13.40', '7.30'] }
];

backdrop();
header();
out.push('<path d="M235 173.500H1812" stroke="#8b0000" stroke-width="5.500" stroke-linecap="round"/>');
feeder('#1SW', 405.5, 305, 493.5, 432, 218);
feeder('#3SW', 1215, 1116, 1304, 1240, 208);
feeder('#4SW', 1606, 1506.5, 1694.5, 1632, 212);
summary();
bays.forEach(b => { if (!b.hidden) bay(b); readings(b); });
document.getElementById('scene').innerHTML = out.join('');

// Signal table: [label, label centre y, value centre y, row top, values]
const lamps = Array(8).fill('o');
const rows = [
  ['预警信号', 663, 663.5, 650, lamps], ['告警信号', 686, 686, 675, lamps], ['保护信号', 712.5, 712, 697, lamps],
  ['启停机遥控', 737.5, 737.500, 727, lamps], ['离网控制模式', 764, 764, 753, lamps],
  ['PQ控制模式', 789.5, 789.7, 775, ['q', 'q', 'q', 'q', 'q', 'p', 'q', 'p']], ['CCU控制投入', 815, 815.7, 801, Array(8).fill('r')],
  ['SOC', 839.5, 838.5, 831, ['50.00%', '54.00%', '53.00%', '54.00%', '54.00%', '54.00%', '53.00%', '54.00%']],
  ['SOH', 865.5, 863, 853, Array(8).fill('100.00%')],
  ['总电压', 888.5, 888, 879, Array(8).fill('0.00V')],
  ['总电流', 915.5, 913, 902, ['0.70A', '0.90A', '0.70A', '0.70A', '0.60A', '0.70A', '0.80A', '0.80A']],
  ['单次充电量', 938.5, 939, 928, ['1.66kWh', '1.43kWh', '1.47kWh', '1.37kWh', '1.52kWh', '1.53kWh', '1.44kWh', '1.47kWh']],
  ['单次放电量', 963.5, 964, 950, ['38.48kWh', '0.42kWh', '0.18kWh', '0.41kWh', '0.40kWh', '0.40kWh', '0.41kWh', '0.40kWh']],
  ['累计充电量', 988.5, 989, 980, ['8.289MWh', '7.178MWh', '0.658MW', '0.606MW', '6.973MWh', '7.386MWh', '7.637MWh', '9.348MWh']],
  ['累计放电量', 1011.5, 1012, 1002, ['7.785MWh', '6.671MWh', '0.023MW', '9.994MWh', '6.509MWh', '6.900MWh', '7.119MWh', '8.761MWh']]
];
const centres = [305.3, 492.2, 703.3, 893, 1120, 1306, 1506.7, 1696];
const edges = [239, 432, 626, 820, 1014, 1208, 1402, 1596];
const lampClass = { o: 'lamp', q: 'lamp red pq', p: 'lamp pink', r: 'lamp red' };
let html = '';
rows.forEach(([name, ly, vy, top, vals]) => {
  html += `<div class="cell"><span class="name" style="margin-top:${ly - 10 - top}px">${name}</span></div>`;
  vals.forEach((v, i) => {
    const cls = lampClass[v];
    const w = cls ? (v === 'q' ? 19 : 21) : 79, h = cls ? (v === 'q' ? 16 : 18) : 20;
    const x = centres[i] + (cls ? 0 : 8.6) - w / 2 - edges[i];
    html += `<div class="cell"><span class="${cls || 'val'}" style="margin:${vy - h / 2 - top}px 0 0 ${x}px">${cls ? '' : v}</span></div>`;
  });
});
document.getElementById('signals').innerHTML = html;
```
